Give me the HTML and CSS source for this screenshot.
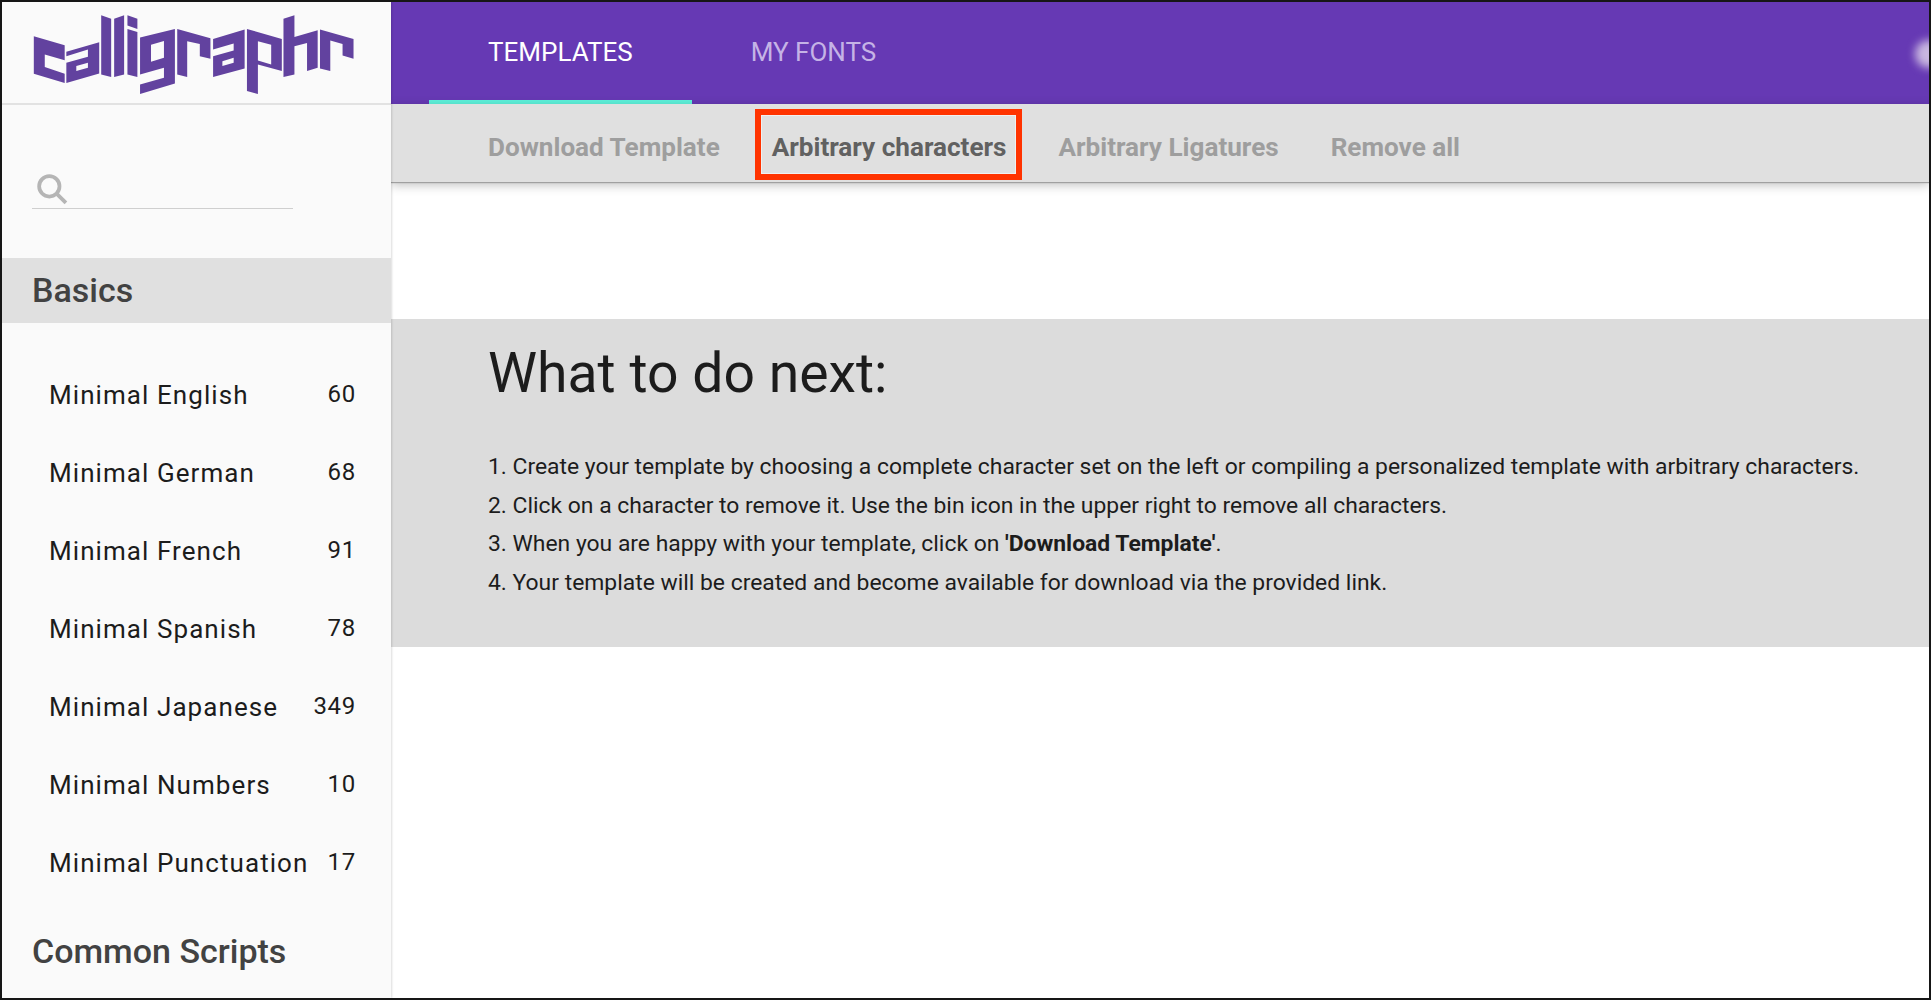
FILE: index.html
```html
<!DOCTYPE html>
<html lang="en">
<head>
<meta charset="utf-8">
<title>calligraphr</title>
<link rel="stylesheet" href="styles.css">
</head>
<body>
<div class="frame">
  <aside class="sidebar">
    <div class="brand">
      <svg class="logo" viewBox="90 40 985 250" role="img" aria-label="calligraphr">
        <path d="M100 110 193 137 193 182 133 165 133 203 193 223 193 251 100 223Z"/>
        <path fill-rule="evenodd" d="M198 157 297 128 297 222 198 251 198 190 263 172 263 150 198 170ZM228 200 263 190 263 205 228 215Z"/>
        <path d="M303 47 333 57 333 233 303 225Z"/>
        <path d="M342 57 372 47 372 225 342 233Z"/>
        <path d="M382 47 412 57 412 88 382 78Z"/>
        <path d="M382 88 412 97 412 233 382 225Z"/>
        <path fill-rule="evenodd" d="M420 114 525 88 525 252 420 284 420 255 492 235 492 205 420 225ZM453 136 492 124 492 175 453 187Z"/>
        <path d="M532 88 632 116 632 178 600 170 600 133 562 125 562 233 532 225Z"/>
        <path fill-rule="evenodd" d="M640 118 735 90 735 207 640 233 640 170 702 153 702 132 640 150ZM668 185 702 175 702 190 668 200Z"/>
        <path fill-rule="evenodd" d="M742 88 847 118 847 215 775 195 775 284 742 275ZM775 125 815 136 815 195 775 183Z"/>
        <path d="M852 57 885 47 885 112 955 92 955 205 923 215 923 130 885 140 885 225 852 233Z"/>
        <path d="M962 90 1063 118 1063 178 1030 168 1030 133 993 123 993 215 962 207Z"/>
      </svg>
    </div>
    <div class="search">
      <svg class="search-icon" viewBox="0 0 28 28" aria-hidden="true">
        <circle cx="11.5" cy="11.5" r="9.5"/>
        <path d="M18.5 18.5 27 27"/>
      </svg>
    </div>
    <h2 class="section section-active">Basics</h2>
    <ul class="items">
      <li class="item"><span>Minimal English</span><span class="count">60</span></li>
      <li class="item"><span>Minimal German</span><span class="count">68</span></li>
      <li class="item"><span>Minimal French</span><span class="count">91</span></li>
      <li class="item"><span>Minimal Spanish</span><span class="count">78</span></li>
      <li class="item"><span>Minimal Japanese</span><span class="count">349</span></li>
      <li class="item"><span>Minimal Numbers</span><span class="count">10</span></li>
      <li class="item"><span>Minimal Punctuation</span><span class="count">17</span></li>
    </ul>
    <h2 class="section">Common Scripts</h2>
  </aside>
  <main class="main">
    <header class="topbar">
      <a class="tab tab-active">TEMPLATES</a>
      <a class="tab">MY FONTS</a>
      <span class="glow"></span>
    </header>
    <nav class="subbar">
      <a class="action">Download Template</a>
      <a class="action action-active">Arbitrary characters</a>
      <a class="action">Arbitrary Ligatures</a>
      <a class="action">Remove all</a>
    </nav>
    <section class="panel">
      <h1 class="panel-title">What to do next:</h1>
      <ol class="steps">
        <li>Create your template by choosing a complete character set on the left or compiling a personalized template with arbitrary characters.</li>
        <li>Click on a character to remove it. Use the bin icon in the upper right to remove all characters.</li>
        <li>When you are happy with your template, click on <b>'Download Template'</b>.</li>
        <li>Your template will be created and become available for download via the provided link.</li>
      </ol>
    </section>
  </main>
</div>
</body>
</html>
```
FILE: styles.css
```css
* { box-sizing: border-box; }
html, body { margin: 0; height: 100%; }
body { background: #fff; font-family: Roboto, "Liberation Sans", sans-serif; overflow: hidden; }

.frame {
  display: flex;
  height: 1000px;
  border: 2px solid #161616;
  overflow: hidden;
}

.sidebar {
  flex: 0 0 388px;
  background: #fafafa;
  box-shadow: 1px 0 2px rgba(0, 0, 0, .14);
  position: relative;
  z-index: 2;
}
.brand {
  height: 103px;
  border-bottom: 2px solid #e2e2e2;
  padding: 11px 0 0 28px;
}
.logo { display: block; width: 328px; height: 83px; }
.logo path { fill: #62429f; }

.search {
  height: 153px;
  padding: 69px 0 0 35px;
}
.search::after {
  content: "";
  display: block;
  width: 261px;
  height: 1px;
  margin: 4px 0 0 -5px;
  background: #cfcfcf;
}
.search-icon { display: block; width: 30px; height: 30px; overflow: visible; }
.search-icon circle, .search-icon path { fill: none; stroke: #b5b5b5; stroke-width: 3.5; }

.section {
  margin: 0;
  padding: 0 0 0 30px;
  height: 65px;
  line-height: 64px;
  font-size: 34px;
  font-weight: 500;
  color: #424242;
}
.section-active { background: #e0e0e0; width: 389px; }

.items {
  list-style: none;
  margin: 0;
  padding: 32.5px 35px 16.7px 47px;
  display: grid;
  grid-auto-rows: 78.1px;
}
.item {
  display: flex;
  justify-content: space-between;
  align-items: center;
  font-size: 26px;
  letter-spacing: 1.07px;
  color: #1c1c1c;
}
.count { font-size: 24px; letter-spacing: .7px; position: relative; top: -1px; }

.main { flex: 1; min-width: 0; display: flex; flex-direction: column; }

.topbar {
  height: 102px;
  background: #6639b4;
  display: flex;
  padding-left: 38px;
  position: relative;
  overflow: hidden;
}
.tab {
  padding: 0 59px;
  font-size: 26px;
  line-height: 100px;
  color: #c5b3e6;
  border-bottom: 4px solid transparent;
}
.tab-active { color: #fff; border-bottom-color: #5ff2db; }
.glow {
  position: absolute;
  right: -14px;
  top: 38px;
  width: 28px;
  height: 28px;
  border-radius: 50%;
  background: #c9b7e0;
  filter: blur(4px);
}

.subbar {
  height: 78px;
  background: #e0e0e0;
  display: flex;
  align-items: center;
  gap: 52px;
  padding: 8px 0 0 97px;
  box-shadow: 0 1px 1px #a0a0a0, 0 3px 10px rgba(0, 0, 0, .25);
  position: relative;
  z-index: 1;
}
.action {
  font-size: 26.1px;
  font-weight: 700;
  color: #9e9e9e;
  position: relative;
}
.action-active { color: #616161; }
.action-active::after {
  content: "";
  position: absolute;
  left: -17px;
  right: -16px;
  top: -23px;
  bottom: -18px;
  border: 6px solid #ff3300;
  box-shadow: inset 0 0 0 1px #f0f0f0;
}

.panel {
  margin-top: 137px;
  height: 328px;
  background: #dcdcdc;
  padding: 17px 0 0 97px;
  color: #1c1c1c;
}
.panel-title {
  margin: 0;
  font-size: 55.3px;
  font-weight: 400;
  line-height: 76px;
}
.steps {
  margin: 36px 0 0;
  padding: 0;
  list-style: decimal inside;
  font-size: 22.88px;
  line-height: 38.7px;
}
.steps b { font-weight: 700; }
```
